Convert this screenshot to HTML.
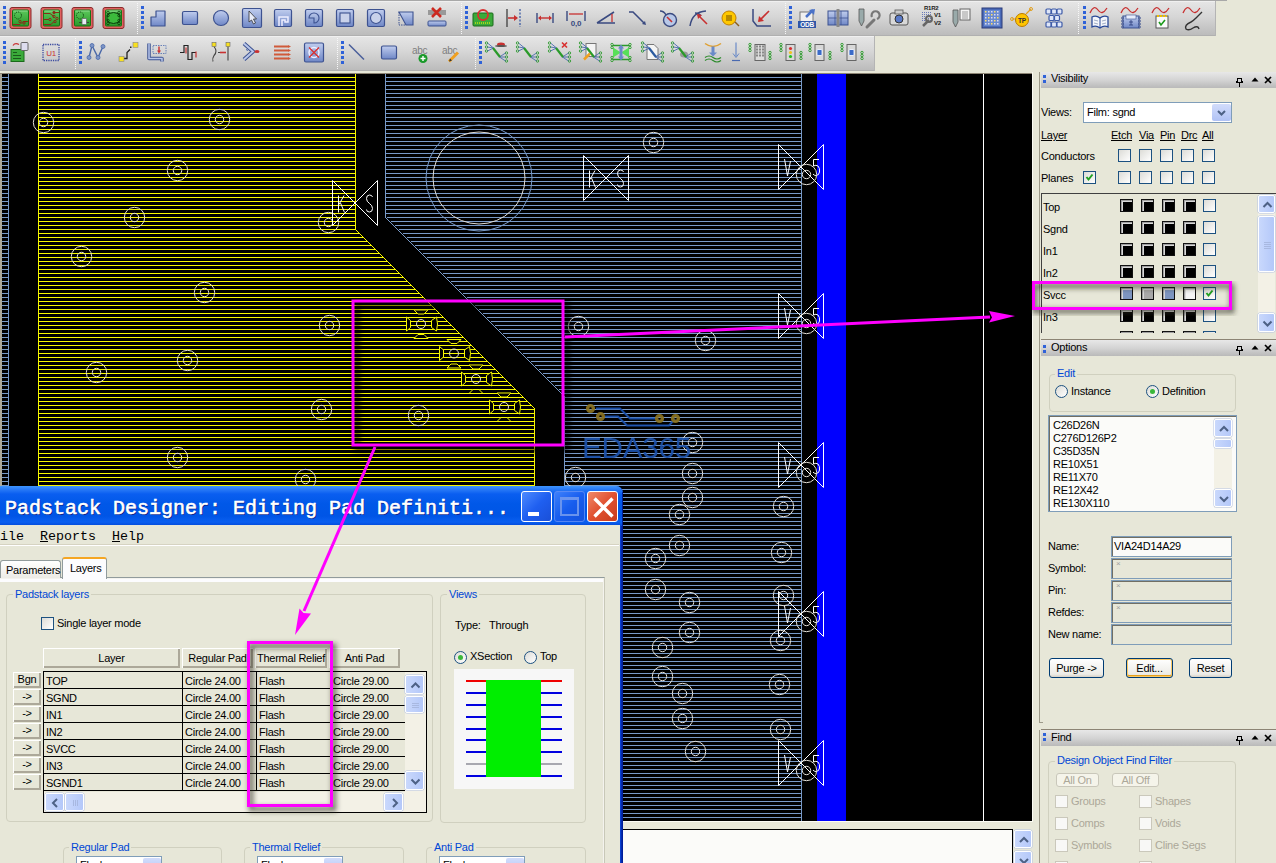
<!DOCTYPE html>
<html><head><meta charset="utf-8"><style>
*{box-sizing:border-box}
body{margin:0;width:1276px;height:863px;overflow:hidden;position:relative;background:#e7e7d8;font-family:"Liberation Sans",sans-serif;font-size:11px;color:#000;letter-spacing:-0.25px}
.t{position:absolute;white-space:pre;font-size:11px;line-height:13px}
.u{text-decoration:underline}
.blue{color:#0046d5}
.gray{color:#aca899}
.cb{position:absolute;width:13px;height:13px;border:1px solid #1c5180;background:linear-gradient(135deg,#dcdcd7,#ffffff)}
.cb svg{left:0;top:0}
.cbd{position:absolute;width:13px;height:13px;border:1px solid #cac8bb;background:#f8f8f6}
.blk{position:absolute;width:13px;height:13px;border:1px solid #111;background:#000;box-shadow:inset 1px 1px 0 #a0a0a0,inset 2px 2px 0 #d8d8d8}
.ptb{position:absolute;left:1041px;width:235px;background:linear-gradient(#e8e8e8,#d4d4d4 50%,#b9b9b9)}
.grip{position:absolute;left:2px;width:3px;height:3px;background:#2f62d8}
.combo{position:absolute;border:1px solid #7f9db9;background:#fff}
.cbtn{position:absolute;background:linear-gradient(#d2dcfb,#b0c2f5);border-radius:2px}
.sbtn{position:absolute;background:linear-gradient(90deg,#c9d8fc,#b4c8f9);border:1px solid #fff;border-radius:2px;box-shadow:0 0 0 0.5px #b5c4e4}
.grp{position:absolute;border:1px solid #d0d0bf;border-radius:4px}
.rad{position:absolute;width:13px;height:13px;border:1px solid #1c5180;border-radius:50%;background:linear-gradient(135deg,#dcdcd7,#fff)}
.rad .dot{position:absolute;left:3px;top:3px;width:5px;height:5px;border-radius:50%;background:#3ab83a}
.lbox{position:absolute;border:1px solid #7f9db9;background:#fbfbf9;overflow:hidden;box-shadow:inset 1px 1px 0 #716f64}
.tbox{position:absolute;border:1px solid #7f9db9;background:#e7e7d8;box-shadow:inset 1px 1px 0 #716f64}
.btn{position:absolute;border:1px solid #003c74;border-radius:3px;background:linear-gradient(#fff,#ecebe6 85%,#d6d0c5);text-align:center;line-height:16px;font-size:11px}
.btn.def{box-shadow:inset 0 0 0 1px #f9c865,inset 0 -1px 0 1px #e5a01a}
.btn.dis{border-color:#c9c7ba;color:#aca899;background:#f5f4ea}
.xpb{position:absolute;width:31px;height:31px;border:1px solid #fff;border-radius:3px;background:linear-gradient(135deg,#4d8bff,#1f5ff0 50%,#1a4fd8)}
.xpb.dis{opacity:.75;border-color:#6d94f5}
.xpb.cls{background:linear-gradient(135deg,#f08a6a,#e05030 50%,#c83c1c)}
.tab{position:absolute;border:1px solid #919b9c;border-bottom:none;border-radius:3px 3px 0 0;background:linear-gradient(#fff,#ecebe5)}
.tab.sel{background:#fcfcfe;border-top:2px solid #f5a623}
.hdr{position:absolute;background:#e7e7d8;text-align:center;line-height:20px;box-shadow:inset 1px 1px 0 #fff,inset -2px -2px 0 #aca899}
.rbtn{position:absolute;background:#e7e7d8;text-align:center;line-height:15px;box-shadow:inset 1px 1px 0 #fff,inset -2px -2px 0 #aca899}
</style></head><body>
<svg width="1276" height="73" style="position:absolute;left:0;top:0"><defs>
<linearGradient id="tbg" x1="0" y1="0" x2="0" y2="1"><stop offset="0" stop-color="#e6e6e6"/><stop offset="0.45" stop-color="#d6d6d6"/><stop offset="1" stop-color="#bababa"/></linearGradient>
<linearGradient id="ib" x1="0" y1="0" x2="0" y2="1"><stop offset="0" stop-color="#c0cdee"/><stop offset="1" stop-color="#6f87c6"/></linearGradient>
<linearGradient id="ig" x1="0" y1="0" x2="0" y2="1"><stop offset="0" stop-color="#5cc85c"/><stop offset="1" stop-color="#2a9a2a"/></linearGradient>
<linearGradient id="ic" x1="0" y1="0" x2="0" y2="1"><stop offset="0" stop-color="#b9c6e8"/><stop offset="1" stop-color="#8399cf"/></linearGradient>
</defs><rect x="0" y="0" width="1227" height="1" fill="#a8a8a8"/><rect x="0" y="1" width="1216" height="35" fill="url(#tbg)"/><rect x="0" y="1" width="1216" height="1" fill="#f0f0f0"/><rect x="0" y="35" width="1216" height="1" fill="#b0b0b0"/><rect x="1215" y="1" width="1" height="35" fill="#b4b4b4"/><rect x="0" y="36" width="875" height="35" fill="url(#tbg)"/><rect x="0" y="36" width="875" height="1" fill="#f0f0f0"/><rect x="0" y="70" width="875" height="1" fill="#b0b0b0"/><rect x="874" y="36" width="1" height="35" fill="#b4b4b4"/><rect x="3" y="6" width="3" height="3" fill="#2f62d8"/><rect x="3" y="11" width="3" height="3" fill="#2f62d8"/><rect x="3" y="16" width="3" height="3" fill="#2f62d8"/><rect x="3" y="21" width="3" height="3" fill="#2f62d8"/><rect x="3" y="26" width="3" height="3" fill="#2f62d8"/><rect x="141" y="6" width="3" height="3" fill="#2f62d8"/><rect x="141" y="11" width="3" height="3" fill="#2f62d8"/><rect x="141" y="16" width="3" height="3" fill="#2f62d8"/><rect x="141" y="21" width="3" height="3" fill="#2f62d8"/><rect x="141" y="26" width="3" height="3" fill="#2f62d8"/><rect x="465" y="6" width="3" height="3" fill="#2f62d8"/><rect x="465" y="11" width="3" height="3" fill="#2f62d8"/><rect x="465" y="16" width="3" height="3" fill="#2f62d8"/><rect x="465" y="21" width="3" height="3" fill="#2f62d8"/><rect x="465" y="26" width="3" height="3" fill="#2f62d8"/><rect x="789" y="6" width="3" height="3" fill="#2f62d8"/><rect x="789" y="11" width="3" height="3" fill="#2f62d8"/><rect x="789" y="16" width="3" height="3" fill="#2f62d8"/><rect x="789" y="21" width="3" height="3" fill="#2f62d8"/><rect x="789" y="26" width="3" height="3" fill="#2f62d8"/><rect x="1083" y="6" width="3" height="3" fill="#2f62d8"/><rect x="1083" y="11" width="3" height="3" fill="#2f62d8"/><rect x="1083" y="16" width="3" height="3" fill="#2f62d8"/><rect x="1083" y="21" width="3" height="3" fill="#2f62d8"/><rect x="1083" y="26" width="3" height="3" fill="#2f62d8"/><line x1="137.5" y1="3" x2="137.5" y2="35" stroke="#f8f8f8" stroke-width="1" stroke-dasharray="1,1"/><line x1="461.5" y1="3" x2="461.5" y2="35" stroke="#f8f8f8" stroke-width="1" stroke-dasharray="1,1"/><line x1="785.5" y1="3" x2="785.5" y2="35" stroke="#f8f8f8" stroke-width="1" stroke-dasharray="1,1"/><line x1="1078.5" y1="3" x2="1078.5" y2="35" stroke="#f8f8f8" stroke-width="1" stroke-dasharray="1,1"/><rect x="3" y="41" width="3" height="3" fill="#2f62d8"/><rect x="3" y="46" width="3" height="3" fill="#2f62d8"/><rect x="3" y="51" width="3" height="3" fill="#2f62d8"/><rect x="3" y="56" width="3" height="3" fill="#2f62d8"/><rect x="3" y="61" width="3" height="3" fill="#2f62d8"/><rect x="79" y="41" width="3" height="3" fill="#2f62d8"/><rect x="79" y="46" width="3" height="3" fill="#2f62d8"/><rect x="79" y="51" width="3" height="3" fill="#2f62d8"/><rect x="79" y="56" width="3" height="3" fill="#2f62d8"/><rect x="79" y="61" width="3" height="3" fill="#2f62d8"/><rect x="341" y="41" width="3" height="3" fill="#2f62d8"/><rect x="341" y="46" width="3" height="3" fill="#2f62d8"/><rect x="341" y="51" width="3" height="3" fill="#2f62d8"/><rect x="341" y="56" width="3" height="3" fill="#2f62d8"/><rect x="341" y="61" width="3" height="3" fill="#2f62d8"/><rect x="479" y="41" width="3" height="3" fill="#2f62d8"/><rect x="479" y="46" width="3" height="3" fill="#2f62d8"/><rect x="479" y="51" width="3" height="3" fill="#2f62d8"/><rect x="479" y="56" width="3" height="3" fill="#2f62d8"/><rect x="479" y="61" width="3" height="3" fill="#2f62d8"/><line x1="75.5" y1="38" x2="75.5" y2="70" stroke="#f8f8f8" stroke-width="1" stroke-dasharray="1,1"/><line x1="337.5" y1="38" x2="337.5" y2="70" stroke="#f8f8f8" stroke-width="1" stroke-dasharray="1,1"/><line x1="475.5" y1="38" x2="475.5" y2="70" stroke="#f8f8f8" stroke-width="1" stroke-dasharray="1,1"/><rect x="10.0" y="7.5" width="21" height="21" rx="2" fill="#e06060" stroke="#8a2a2a" stroke-width="1"/><rect x="12.5" y="10.0" width="16" height="16" rx="1" fill="url(#ig)" stroke="#157515" stroke-width="1"/><path d="M13.5,11.0 h14" stroke="#a0e0a0" stroke-width="0.8"/><circle cx="18.0" cy="15.5" r="3.5" fill="none" stroke="#0a3a0a" stroke-dasharray="1,1"/><path d="M13.0,24.5 h7 l3,-3 h5" stroke="#8a2a18" fill="none"/><circle cx="20.0" cy="21.5" r="1.2" fill="none" stroke="#8a2a18"/><circle cx="24.0" cy="23.0" r="1.2" fill="none" stroke="#8a2a18"/><rect x="41.0" y="7.5" width="21" height="21" rx="2" fill="#e06060" stroke="#8a2a2a" stroke-width="1"/><rect x="43.5" y="10.0" width="16" height="16" rx="1" fill="url(#ig)" stroke="#157515" stroke-width="1"/><path d="M44.5,11.0 h14" stroke="#a0e0a0" stroke-width="0.8"/><path d="M44.0,13.5 h6 l4,3 M53.0,12.5 h6 M44.0,19.5 h5 M44.0,24.5 h7 l3,-3" stroke="#8a2a18" fill="none"/><circle cx="54.0" cy="12.5" r="1.2" fill="none" stroke="#8a2a18"/><circle cx="54.0" cy="16.5" r="1.2" fill="none" stroke="#8a2a18"/><circle cx="57.0" cy="18.5" r="1.2" fill="none" stroke="#8a2a18"/><circle cx="50.0" cy="19.5" r="1.2" fill="none" stroke="#8a2a18"/><circle cx="55.0" cy="21.5" r="1.2" fill="none" stroke="#8a2a18"/><rect x="72.0" y="7.5" width="21" height="21" rx="2" fill="#e06060" stroke="#8a2a2a" stroke-width="1"/><rect x="74.5" y="10.0" width="16" height="16" rx="1" fill="url(#ig)" stroke="#157515" stroke-width="1"/><path d="M75.5,11.0 h14" stroke="#a0e0a0" stroke-width="0.8"/><circle cx="80.0" cy="15.5" r="3.5" fill="none" stroke="#0a3a0a" stroke-dasharray="1,1"/><path d="M79.0,22.5 h10" stroke="#333" stroke-width="0.8"/><rect x="82.0" y="18.5" width="4.5" height="6" rx="0.8" fill="#e8ecf4" stroke="#666" stroke-width="0.8"/><rect x="103.0" y="7.5" width="21" height="21" rx="2" fill="#e06060" stroke="#8a2a2a" stroke-width="1"/><rect x="105.5" y="10.0" width="16" height="16" rx="1" fill="url(#ig)" stroke="#157515" stroke-width="1"/><path d="M106.5,11.0 h14" stroke="#a0e0a0" stroke-width="0.8"/><path d="M109.0,13.5 q4.5,-2 9,0 l2,3 v3 l-2,3 q-4.5,2 -9,0 l-2,-3 v-3 Z" fill="#3cba3c" stroke="#0a3a0a" stroke-width="1"/><circle cx="108.0" cy="12.5" r="1.3" fill="none" stroke="#0a3a0a" stroke-width="0.8"/><circle cx="108.0" cy="15.5" r="1.3" fill="none" stroke="#0a3a0a" stroke-width="0.8"/><circle cx="119.0" cy="12.5" r="1.3" fill="none" stroke="#0a3a0a" stroke-width="0.8"/><circle cx="119.0" cy="15.5" r="1.3" fill="none" stroke="#0a3a0a" stroke-width="0.8"/><circle cx="108.0" cy="20.5" r="1.3" fill="none" stroke="#0a3a0a" stroke-width="0.8"/><circle cx="108.0" cy="23.5" r="1.3" fill="none" stroke="#0a3a0a" stroke-width="0.8"/><circle cx="119.0" cy="20.5" r="1.3" fill="none" stroke="#0a3a0a" stroke-width="0.8"/><circle cx="119.0" cy="23.5" r="1.3" fill="none" stroke="#0a3a0a" stroke-width="0.8"/><path d="M151,17 h5 v-6 h9 v15 h-14 Z" fill="url(#ib)" stroke="#3d5290" stroke-width="1.2" stroke-linejoin="round"/><rect x="182.5" y="11.5" width="15" height="13" rx="1.5" fill="url(#ib)" stroke="#3d5290" stroke-width="1.2"/><circle cx="221" cy="18" r="7.5" fill="url(#ib)" stroke="#3d5290" stroke-width="1.2"/><rect x="242.5" y="8.5" width="19" height="19" rx="1.5" fill="url(#ib)" stroke="#3d5290" stroke-width="1.2"/><path d="M249,11 l0,11 l2.5,-2 l2,4 l2,-1 l-2,-4 l3,0 Z" fill="#e8ecf8" stroke="#333" stroke-width="0.8"/><rect x="274.5" y="9.5" width="17" height="17" rx="1.5" fill="url(#ib)" stroke="#3d5290" stroke-width="1.2"/><path d="M279,26 v-9 h9 v5 h-3 v-2 h-3 v6" fill="none" stroke="#eef" stroke-width="1.5"/><rect x="305.5" y="9.5" width="17" height="17" rx="1.5" fill="url(#ib)" stroke="#3d5290" stroke-width="1.2"/><path d="M309,18 a5,5 0 1,1 5,5 v-5 Z" fill="url(#ic)" stroke="#3d5290" stroke-width="1.1"/><rect x="336.5" y="9.5" width="17" height="17" rx="1.5" fill="url(#ib)" stroke="#3d5290" stroke-width="1.2"/><rect x="340" y="13" width="10" height="10" fill="#c9d2ea" stroke="#3d5290" stroke-width="1.1"/><rect x="367.5" y="9.5" width="17" height="17" rx="1.5" fill="url(#ib)" stroke="#3d5290" stroke-width="1.2"/><circle cx="376" cy="18" r="5.5" fill="#c9d2ea" stroke="#3d5290" stroke-width="1.1"/><path d="M399,12 h14 v13 h-7 Z" fill="url(#ib)" stroke="#3d5290" stroke-width="1.1"/><path d="M399,12 v13 h7" fill="none" stroke="#3d5290" stroke-width="1" stroke-dasharray="1.5,1"/><rect x="428" y="10" width="18" height="5" fill="#999"/><path d="M432,8 l9,9 M441,8 l-9,9" stroke="#cc2a20" stroke-width="2.6"/><rect x="428" y="21" width="18" height="5" rx="1" fill="url(#ib)" stroke="#3d5290"/><rect x="473" y="13" width="20" height="13" rx="1" fill="#3aaa3a" stroke="#1a6a1a"/><path d="M475,23 h16" stroke="#ff0" stroke-dasharray="1,1"/><circle cx="483" cy="15" r="5" fill="none" stroke="#d83030" stroke-width="1.8"/><path d="M507,9 v18" stroke="#333" stroke-width="1.2"/><path d="M520,9 v18" stroke="#3050a0" stroke-width="1.2" stroke-dasharray="2,1.5"/><path d="M508,18 h9" stroke="#c83030" stroke-width="1.6"/><path d="M518,18 l-4,-3 v6 Z" fill="#c83030"/><path d="M537,13 v10 M553,13 v10" stroke="#3a4a80" stroke-width="1.4"/><path d="M539,18 h12" stroke="#c83030" stroke-width="1.4"/><path d="M538,18 l3,-2.5 v5 Z M552,18 l-3,-2.5 v5 Z" fill="#c83030"/><path d="M567,11 v10 M585,11 v10" stroke="#3a4a80" stroke-width="1.4"/><path d="M569,14 h14" stroke="#c83030" stroke-width="1.3"/><text x="576" y="26" font-family="Liberation Sans" font-size="8" font-weight="bold" fill="#3a4a80" text-anchor="middle">0,0</text><path d="M597,23 h18 M597,23 l17,-11" stroke="#3a4a80" stroke-width="1.5" fill="none"/><path d="M612,14 v8" stroke="#c83030" stroke-width="1.3"/><path d="M629,12 h4 l11,11" stroke="#3a4a80" stroke-width="1.5" fill="none"/><path d="M646,25 l-4,-1 l3,-3 Z" fill="#3a4a80"/><circle cx="670" cy="20" r="6.5" fill="#b8c8e8" stroke="#3a4a80" stroke-width="1.4"/><path d="M660,11 q4,0 6,4" stroke="#3a4a80" stroke-width="1.4" fill="none"/><path d="M667,17 l5,5" stroke="#c83030" stroke-width="1.6"/><path d="M690,26 q2,-14 16,-15" stroke="#3a4a80" stroke-width="1.5" fill="none"/><path d="M695,13 q4,0 6,3" stroke="#3a4a80" stroke-width="1.4" fill="none"/><path d="M698,15 l9,9" stroke="#c83030" stroke-width="1.6"/><path d="M697,14 l5,1 l-4,4 Z" fill="#c83030"/><circle cx="729" cy="18" r="7" fill="#ffc800" stroke="#c08000" stroke-width="1"/><path d="M726,16 h6 M726,18 h6 M726,20 h6" stroke="#604000" stroke-width="0.9"/><path d="M735,22 l4,4" stroke="#8a6020" stroke-width="1.5"/><path d="M753,9 v12 l4,5 h14" stroke="#3a4a80" stroke-width="1.5" fill="none"/><path d="M769,11 l-10,10" stroke="#c83030" stroke-width="1.6"/><path d="M758,22 l1,-6 l5,5 Z" fill="#c83030"/><rect x="800" y="12" width="13" height="11" fill="#f0f0f0" stroke="#777"/><path d="M806,17 l7,-7" stroke="#4a72c8" stroke-width="2.5"/><path d="M815,9 l-6,1 l5,5 Z" fill="#4a72c8"/><rect x="798" y="21" width="18" height="7" fill="#2f57a8"/><text x="807" y="27.2" font-family="Liberation Sans" font-size="6.5" font-weight="bold" fill="#fff" text-anchor="middle">ODB</text><rect x="828" y="11" width="20" height="14" fill="url(#ib)" stroke="#3d5290"/><path d="M835,11 v14 M841,11 v14 M828,18 h20" stroke="#3d5290" stroke-width="0.8"/><rect x="836.5" y="9" width="3" height="18" fill="#888"/><path d="M859,9 h5 v12 l-2.5,5 l-2.5,-5 Z" fill="#9aa" stroke="#555" stroke-width="0.8"/><path d="M867,27 l7,-7" stroke="#777" stroke-width="3" stroke-linecap="round"/><path d="M872,17 a4,4 0 1,1 5,2" fill="none" stroke="#777" stroke-width="2.2"/><rect x="890" y="13" width="18" height="12" rx="2" fill="#d8d8d8" stroke="#555"/><rect x="895" y="10" width="8" height="4" fill="#ccc" stroke="#555" stroke-width="0.8"/><circle cx="899" cy="19" r="4" fill="#5a7ac8" stroke="#333"/><text x="924" y="10" font-family="Liberation Sans" font-size="6" font-weight="bold" fill="#222">R1R2</text><text x="934" y="17" font-family="Liberation Sans" font-size="6" font-weight="bold" fill="#222">V1</text><text x="934" y="25" font-family="Liberation Sans" font-size="6" font-weight="bold" fill="#222">V2</text><rect x="922" y="12" width="1" height="1" fill="#6a7ab8"/><rect x="922" y="14" width="1" height="1" fill="#6a7ab8"/><rect x="922" y="16" width="1" height="1" fill="#6a7ab8"/><rect x="922" y="18" width="1" height="1" fill="#6a7ab8"/><rect x="922" y="20" width="1" height="1" fill="#6a7ab8"/><rect x="924" y="12" width="1" height="1" fill="#6a7ab8"/><rect x="924" y="14" width="1" height="1" fill="#6a7ab8"/><rect x="924" y="16" width="1" height="1" fill="#6a7ab8"/><rect x="924" y="18" width="1" height="1" fill="#6a7ab8"/><rect x="924" y="20" width="1" height="1" fill="#6a7ab8"/><rect x="926" y="12" width="1" height="1" fill="#6a7ab8"/><rect x="926" y="14" width="1" height="1" fill="#6a7ab8"/><rect x="926" y="16" width="1" height="1" fill="#6a7ab8"/><rect x="926" y="18" width="1" height="1" fill="#6a7ab8"/><rect x="926" y="20" width="1" height="1" fill="#6a7ab8"/><rect x="928" y="12" width="1" height="1" fill="#6a7ab8"/><rect x="928" y="14" width="1" height="1" fill="#6a7ab8"/><rect x="928" y="16" width="1" height="1" fill="#6a7ab8"/><rect x="928" y="18" width="1" height="1" fill="#6a7ab8"/><rect x="928" y="20" width="1" height="1" fill="#6a7ab8"/><rect x="930" y="12" width="1" height="1" fill="#6a7ab8"/><rect x="930" y="14" width="1" height="1" fill="#6a7ab8"/><rect x="930" y="16" width="1" height="1" fill="#6a7ab8"/><rect x="930" y="18" width="1" height="1" fill="#6a7ab8"/><rect x="930" y="20" width="1" height="1" fill="#6a7ab8"/><path d="M923,26 l6,-6" stroke="#666" stroke-width="2.5"/><circle cx="929" cy="19" r="3" fill="none" stroke="#666" stroke-width="2"/><path d="M953,10 h5 v12 l-2.5,5 l-2.5,-5 Z" fill="#9aa" stroke="#555" stroke-width="0.8"/><rect x="960" y="9" width="10" height="11" fill="#f4f4f4" stroke="#666"/><path d="M962,12 h6 M962,14 h6 M962,16 h6 M962,18 h6" stroke="#777" stroke-width="0.7"/><rect x="982" y="8" width="20" height="20" fill="#4a6ab8" stroke="#2a3a78"/><rect x="984" y="10" width="16" height="16" fill="#6a8ad0"/><rect x="985" y="11" width="1.5" height="1.5" fill="#ffe060"/><rect x="985" y="14" width="1.5" height="1.5" fill="#dde"/><rect x="985" y="17" width="1.5" height="1.5" fill="#dde"/><rect x="985" y="20" width="1.5" height="1.5" fill="#ffe060"/><rect x="985" y="23" width="1.5" height="1.5" fill="#dde"/><rect x="988" y="11" width="1.5" height="1.5" fill="#dde"/><rect x="988" y="14" width="1.5" height="1.5" fill="#dde"/><rect x="988" y="17" width="1.5" height="1.5" fill="#ffe060"/><rect x="988" y="20" width="1.5" height="1.5" fill="#dde"/><rect x="988" y="23" width="1.5" height="1.5" fill="#dde"/><rect x="991" y="11" width="1.5" height="1.5" fill="#dde"/><rect x="991" y="14" width="1.5" height="1.5" fill="#ffe060"/><rect x="991" y="17" width="1.5" height="1.5" fill="#dde"/><rect x="991" y="20" width="1.5" height="1.5" fill="#dde"/><rect x="991" y="23" width="1.5" height="1.5" fill="#ffe060"/><rect x="994" y="11" width="1.5" height="1.5" fill="#ffe060"/><rect x="994" y="14" width="1.5" height="1.5" fill="#dde"/><rect x="994" y="17" width="1.5" height="1.5" fill="#dde"/><rect x="994" y="20" width="1.5" height="1.5" fill="#ffe060"/><rect x="994" y="23" width="1.5" height="1.5" fill="#dde"/><rect x="997" y="11" width="1.5" height="1.5" fill="#dde"/><rect x="997" y="14" width="1.5" height="1.5" fill="#dde"/><rect x="997" y="17" width="1.5" height="1.5" fill="#ffe060"/><rect x="997" y="20" width="1.5" height="1.5" fill="#dde"/><rect x="997" y="23" width="1.5" height="1.5" fill="#dde"/><path d="M1012,19 h4 M1026,14 l5,-5" stroke="#e0a020" stroke-width="1.2"/><circle cx="1012" cy="19" r="1.5" fill="none" stroke="#e0a020"/><circle cx="1031" cy="9" r="1.5" fill="none" stroke="#e0a020"/><circle cx="1022" cy="20" r="6.5" fill="#ffc400" stroke="#b87a00"/><text x="1022" y="23" font-family="Liberation Sans" font-size="6.5" font-weight="bold" fill="#333" text-anchor="middle">TP</text><rect x="1046" y="9" width="5" height="5" rx="1" fill="#dfe6f8" stroke="#3d5aa8" stroke-width="1.2"/><rect x="1051.5" y="9" width="5" height="5" rx="1" fill="#dfe6f8" stroke="#3d5aa8" stroke-width="1.2"/><rect x="1057" y="9" width="5" height="5" rx="1" fill="#dfe6f8" stroke="#3d5aa8" stroke-width="1.2"/><rect x="1049" y="15.5" width="5" height="5" rx="1" fill="#dfe6f8" stroke="#3d5aa8" stroke-width="1.2"/><rect x="1054.5" y="15.5" width="5" height="5" rx="1" fill="#dfe6f8" stroke="#3d5aa8" stroke-width="1.2"/><rect x="1046" y="22" width="5" height="5" rx="1" fill="#dfe6f8" stroke="#3d5aa8" stroke-width="1.2"/><rect x="1051.5" y="22" width="5" height="5" rx="1" fill="#dfe6f8" stroke="#3d5aa8" stroke-width="1.2"/><rect x="1057" y="22" width="5" height="5" rx="1" fill="#dfe6f8" stroke="#3d5aa8" stroke-width="1.2"/><path d="M1090,13 Q1094,4 1098,10 Q1102,16 1107,8" stroke="#c83030" stroke-width="1.3" fill="none"/><path d="M1121,13 Q1125,4 1129,10 Q1133,16 1138,8" stroke="#c83030" stroke-width="1.3" fill="none"/><path d="M1152,13 Q1156,4 1160,10 Q1164,16 1169,8" stroke="#c83030" stroke-width="1.3" fill="none"/><path d="M1183,13 Q1187,4 1191,10 Q1195,16 1200,8" stroke="#c83030" stroke-width="1.3" fill="none"/><path d="M1092,17 q4,-2 8,1 q4,-3 8,-1 v10 q-4,-2 -8,1 q-4,-3 -8,-1 Z" fill="#f4f6fb" stroke="#2a4a98" stroke-width="1.3"/><path d="M1100,18 v10" stroke="#2a4a98"/><path d="M1094,20 l4,1 M1094,23 l4,1 M1102,21 l4,-1 M1102,24 l4,-1" stroke="#8a9ab8" stroke-width="0.8"/><rect x="1123" y="16" width="16" height="12" fill="url(#ib)" stroke="#3d5290"/><rect x="1126" y="15" width="10" height="4" fill="#e8eefc" stroke="#3d5290" stroke-width="0.6"/><circle cx="1122.5" cy="18" r="1" fill="none" stroke="#3d5290" stroke-width="0.8"/><circle cx="1122.5" cy="21" r="1" fill="none" stroke="#3d5290" stroke-width="0.8"/><circle cx="1122.5" cy="24" r="1" fill="none" stroke="#3d5290" stroke-width="0.8"/><circle cx="1122.5" cy="27" r="1" fill="none" stroke="#3d5290" stroke-width="0.8"/><circle cx="1139.5" cy="18" r="1" fill="none" stroke="#3d5290" stroke-width="0.8"/><circle cx="1139.5" cy="21" r="1" fill="none" stroke="#3d5290" stroke-width="0.8"/><circle cx="1139.5" cy="24" r="1" fill="none" stroke="#3d5290" stroke-width="0.8"/><circle cx="1139.5" cy="27" r="1" fill="none" stroke="#3d5290" stroke-width="0.8"/><path d="M1129,22 h4 M1131,20 v5 M1129,25 h4" stroke="#2a3a78" stroke-width="0.8"/><rect x="1156" y="16" width="12" height="12" fill="#fafafa" stroke="#555"/><path d="M1157,16 h10" stroke="#f0c000" stroke-width="2" stroke-dasharray="2,1"/><path d="M1159,22 l2,3 l4,-5" stroke="#1a9a1a" stroke-width="1.6" fill="none"/><path d="M1202,12 l-6,6 q-3,3 -5,4 q-7,3 -5,7 q3,2 7,-1 q5,-3 6,1" stroke="#333" stroke-width="1.4" fill="none"/><rect x="11" y="49.5" width="13" height="12" fill="#3aaa3a" stroke="#1a6a1a"/><path d="M13,52.5 h4 M13,55.5 h8 M13,58.5 h8" stroke="#1a5a1a"/><rect x="21" y="42.5" width="7" height="8" rx="1" fill="#dde" stroke="#666"/><path d="M13,45.5 q2,-3 6,-1" stroke="#c83030" stroke-width="1.3" fill="none"/><rect x="43" y="44.5" width="16" height="16" fill="none" stroke="#3a4aa0" stroke-width="1.3" stroke-dasharray="1.3,1"/><text x="51" y="56.0" font-family="Liberation Sans" font-size="8" fill="#c83030" text-anchor="middle">U1</text><path d="M89,57.5 l3,-12 l6,12 l5,-11" stroke="#4a68a8" stroke-width="1.4" fill="none"/><circle cx="89" cy="57.5" r="2" fill="#7d95c8" stroke="#4a68a8" stroke-width="0.8"/><circle cx="92" cy="45.5" r="2" fill="#7d95c8" stroke="#4a68a8" stroke-width="0.8"/><circle cx="98" cy="57.5" r="2" fill="#7d95c8" stroke="#4a68a8" stroke-width="0.8"/><circle cx="103" cy="46.5" r="2" fill="#7d95c8" stroke="#4a68a8" stroke-width="0.8"/><path d="M124,58.5 h3 v-6 l3,-3" stroke="#222" stroke-width="1.3" fill="none"/><rect x="119" y="56.5" width="5" height="5" fill="#f8e020" stroke="#888" stroke-width="0.6"/><rect x="133" y="42.5" width="5" height="5" fill="#f8e020" stroke="#888" stroke-width="0.6"/><rect x="130" y="46.5" width="1.5" height="1.5" fill="#222"/><path d="M149,43.5 v15 h13 v3" stroke="#3d5290" stroke-width="3.5" fill="none" stroke-linejoin="round"/><path d="M149,43.5 v15 h13 v3" stroke="#b8c6ea" stroke-width="1.5" fill="none"/><rect x="153" y="45.5" width="13" height="8" fill="none" stroke="#4a6ab0" stroke-width="0.8" stroke-dasharray="1.5,1"/><path d="M159,46.5 v5" stroke="#c83030" stroke-width="1.4"/><path d="M157,50.5 h4 l-2,3 Z" fill="#c83030"/><path d="M180,52.5 h4 v-7 h4 v14 h4 v-7 h4" stroke="#222" stroke-width="1.2" fill="none"/><path d="M186,53.5 v-6 M196,51.5 v6" stroke="#c83030" stroke-width="1.2"/><path d="M214,46.5 q4,5 0,9 q-2,3 -1,6 M228,46.5 v14 M218,52.5 h8" stroke="#444" stroke-width="1.1" fill="none"/><path d="M220,52.5 h6" stroke="#c83030" stroke-width="1.6"/><rect x="212" y="42.5" width="4" height="4" fill="#f8e020" stroke="#666" stroke-width="0.6"/><rect x="226" y="42.5" width="4" height="4" fill="#f8e020" stroke="#666" stroke-width="0.6"/><path d="M244,43.5 l9,8 l-9,8" stroke="#3d5290" stroke-width="4" fill="none"/><path d="M244,43.5 l9,8 l-9,8" stroke="#b8c6ea" stroke-width="2" fill="none"/><ellipse cx="257" cy="51.5" rx="2.5" ry="1.5" fill="#c83030"/><path d="M246,49.5 l2,1" stroke="#4a6ab0"/><path d="M274,46.5 h14" stroke="#d05a3a" stroke-width="2"/><path d="M288,45.0 l3,1.5 l-3,1.5 Z" fill="#d05a3a"/><path d="M274,50.5 h14" stroke="#d05a3a" stroke-width="2"/><path d="M288,49.0 l3,1.5 l-3,1.5 Z" fill="#d05a3a"/><path d="M274,54.5 h14" stroke="#d05a3a" stroke-width="2"/><path d="M288,53.0 l3,1.5 l-3,1.5 Z" fill="#d05a3a"/><path d="M274,58.5 h14" stroke="#d05a3a" stroke-width="2"/><path d="M288,57.0 l3,1.5 l-3,1.5 Z" fill="#d05a3a"/><rect x="304.5" y="43.0" width="19" height="19" rx="1.5" fill="url(#ib)" stroke="#3d5290" stroke-width="1.2"/><circle cx="314" cy="52.5" r="5" fill="none" stroke="#eef" stroke-width="1.5"/><path d="M309,47.5 l10,10 M319,47.5 l-10,10" stroke="#d83030" stroke-width="1.3"/><path d="M349,44.5 l15,15" stroke="#4a5f9a" stroke-width="1.5"/><rect x="381.5" y="46.0" width="15" height="13" rx="1.5" fill="url(#ib)" stroke="#3d5290" stroke-width="1.2"/><text x="412" y="53.5" font-family="Liberation Sans" font-size="10" fill="#808080">abc</text><circle cx="423" cy="58.5" r="4.5" fill="#1a9a2a"/><path d="M420.5,58.5 h5 M423,56.0 v5" stroke="#fff" stroke-width="1.4"/><text x="442" y="53.5" font-family="Liberation Sans" font-size="10" fill="#808080">abc</text><path d="M449,61.5 l9,-9" stroke="#f0a020" stroke-width="3"/><path d="M449,61.5 l1,-3 l2,2 Z" fill="#333"/><circle cx="486.5" cy="43.0" r="1.2" fill="none" stroke="#2a9a2a" stroke-width="0.9"/><circle cx="506.5" cy="53.0" r="1.2" fill="none" stroke="#2a9a2a" stroke-width="0.9"/><circle cx="486.5" cy="47.0" r="1.2" fill="none" stroke="#2a9a2a" stroke-width="0.9"/><circle cx="506.5" cy="57.0" r="1.2" fill="none" stroke="#2a9a2a" stroke-width="0.9"/><circle cx="486.5" cy="51.0" r="1.2" fill="none" stroke="#2a9a2a" stroke-width="0.9"/><circle cx="506.5" cy="61.0" r="1.2" fill="none" stroke="#2a9a2a" stroke-width="0.9"/><path d="M487.5,43.0 l6,5 M487.5,47.0 l6,1 M487.5,51.0 l6,-3" stroke="#4a6ab0" stroke-width="0.9"/><path d="M505.5,53.0 l-6,4 M505.5,57.0 l-6,0 M505.5,61.0 l-6,-4" stroke="#4a6ab0" stroke-width="0.9"/><path d="M493,48.0 l7,9" stroke="#2a9a2a" stroke-width="2.2"/><ellipse cx="501" cy="44.5" rx="4" ry="2" fill="#c83030"/><ellipse cx="501" cy="46.0" rx="6" ry="1" fill="#555"/><circle cx="517.5" cy="43.0" r="1.2" fill="none" stroke="#2a9a2a" stroke-width="0.9"/><circle cx="537.5" cy="53.0" r="1.2" fill="none" stroke="#2a9a2a" stroke-width="0.9"/><circle cx="517.5" cy="47.0" r="1.2" fill="none" stroke="#2a9a2a" stroke-width="0.9"/><circle cx="537.5" cy="57.0" r="1.2" fill="none" stroke="#2a9a2a" stroke-width="0.9"/><circle cx="517.5" cy="51.0" r="1.2" fill="none" stroke="#2a9a2a" stroke-width="0.9"/><circle cx="537.5" cy="61.0" r="1.2" fill="none" stroke="#2a9a2a" stroke-width="0.9"/><path d="M518.5,43.0 l6,5 M518.5,47.0 l6,1 M518.5,51.0 l6,-3" stroke="#4a6ab0" stroke-width="0.9"/><path d="M536.5,53.0 l-6,4 M536.5,57.0 l-6,0 M536.5,61.0 l-6,-4" stroke="#4a6ab0" stroke-width="0.9"/><path d="M524,48.0 l7,9" stroke="#2a9a2a" stroke-width="2.2"/><circle cx="549.5" cy="43.0" r="1.2" fill="none" stroke="#2a9a2a" stroke-width="0.9"/><circle cx="569.5" cy="53.0" r="1.2" fill="none" stroke="#2a9a2a" stroke-width="0.9"/><circle cx="549.5" cy="47.0" r="1.2" fill="none" stroke="#2a9a2a" stroke-width="0.9"/><circle cx="569.5" cy="57.0" r="1.2" fill="none" stroke="#2a9a2a" stroke-width="0.9"/><circle cx="549.5" cy="51.0" r="1.2" fill="none" stroke="#2a9a2a" stroke-width="0.9"/><circle cx="569.5" cy="61.0" r="1.2" fill="none" stroke="#2a9a2a" stroke-width="0.9"/><path d="M550.5,43.0 l6,5 M550.5,47.0 l6,1 M550.5,51.0 l6,-3" stroke="#4a6ab0" stroke-width="0.9"/><path d="M568.5,53.0 l-6,4 M568.5,57.0 l-6,0 M568.5,61.0 l-6,-4" stroke="#4a6ab0" stroke-width="0.9"/><path d="M556,48.0 l7,9" stroke="#2a9a2a" stroke-width="2.2"/><path d="M562,42.5 l5,5 M567,42.5 l-5,5" stroke="#d83030" stroke-width="1.6"/><rect x="586" y="43.5" width="10" height="13" fill="#f4f4f4" stroke="#777"/><circle cx="580.5" cy="43.0" r="1.2" fill="none" stroke="#2a9a2a" stroke-width="0.9"/><circle cx="600.5" cy="53.0" r="1.2" fill="none" stroke="#2a9a2a" stroke-width="0.9"/><circle cx="580.5" cy="47.0" r="1.2" fill="none" stroke="#2a9a2a" stroke-width="0.9"/><circle cx="600.5" cy="57.0" r="1.2" fill="none" stroke="#2a9a2a" stroke-width="0.9"/><circle cx="580.5" cy="51.0" r="1.2" fill="none" stroke="#2a9a2a" stroke-width="0.9"/><circle cx="600.5" cy="61.0" r="1.2" fill="none" stroke="#2a9a2a" stroke-width="0.9"/><path d="M581.5,43.0 l6,5 M581.5,47.0 l6,1 M581.5,51.0 l6,-3" stroke="#4a6ab0" stroke-width="0.9"/><path d="M599.5,53.0 l-6,4 M599.5,57.0 l-6,0 M599.5,61.0 l-6,-4" stroke="#4a6ab0" stroke-width="0.9"/><path d="M587,48.0 l7,9" stroke="#2a9a2a" stroke-width="2.2"/><path d="M584,59.5 l6,-6" stroke="#f0a020" stroke-width="2.5"/><path d="M613,45.5 h16 M613,59.5 h16" stroke="#2a9a2a" stroke-width="1.3"/><path d="M613,47.5 l8,5 l8,-5 v10 l-8,-5 l-8,5 Z" fill="#58e058"/><path d="M621,46.5 v12" stroke="#6a8ac8" stroke-width="3"/><path d="M618,48.5 l3,-4 l3,4 Z M618,56.5 l3,4 l3,-4 Z" fill="#6a8ac8"/><circle cx="612" cy="44.5" r="1.2" fill="none" stroke="#2a9a2a" stroke-width="0.9"/><circle cx="612" cy="47.5" r="1.2" fill="none" stroke="#2a9a2a" stroke-width="0.9"/><circle cx="612" cy="57.5" r="1.2" fill="none" stroke="#2a9a2a" stroke-width="0.9"/><circle cx="612" cy="60.5" r="1.2" fill="none" stroke="#2a9a2a" stroke-width="0.9"/><circle cx="630" cy="44.5" r="1.2" fill="none" stroke="#2a9a2a" stroke-width="0.9"/><circle cx="630" cy="47.5" r="1.2" fill="none" stroke="#2a9a2a" stroke-width="0.9"/><circle cx="630" cy="57.5" r="1.2" fill="none" stroke="#2a9a2a" stroke-width="0.9"/><circle cx="630" cy="60.5" r="1.2" fill="none" stroke="#2a9a2a" stroke-width="0.9"/><path d="M647,44.5 h7 l4,4 v11 h-11 Z" fill="#f4f4f4" stroke="#777"/><circle cx="642.5" cy="43.0" r="1.2" fill="none" stroke="#2a9a2a" stroke-width="0.9"/><circle cx="662.5" cy="53.0" r="1.2" fill="none" stroke="#2a9a2a" stroke-width="0.9"/><circle cx="642.5" cy="47.0" r="1.2" fill="none" stroke="#2a9a2a" stroke-width="0.9"/><circle cx="662.5" cy="57.0" r="1.2" fill="none" stroke="#2a9a2a" stroke-width="0.9"/><circle cx="642.5" cy="51.0" r="1.2" fill="none" stroke="#2a9a2a" stroke-width="0.9"/><circle cx="662.5" cy="61.0" r="1.2" fill="none" stroke="#2a9a2a" stroke-width="0.9"/><path d="M643.5,43.0 l6,5 M643.5,47.0 l6,1 M643.5,51.0 l6,-3" stroke="#4a6ab0" stroke-width="0.9"/><path d="M661.5,53.0 l-6,4 M661.5,57.0 l-6,0 M661.5,61.0 l-6,-4" stroke="#4a6ab0" stroke-width="0.9"/><path d="M649,48.0 l7,9" stroke="#2a5aa0" stroke-width="2.2"/><ellipse cx="684" cy="54.5" rx="4" ry="3" fill="#999"/><circle cx="672.5" cy="43.0" r="1.2" fill="none" stroke="#2a9a2a" stroke-width="0.9"/><circle cx="692.5" cy="53.0" r="1.2" fill="none" stroke="#2a9a2a" stroke-width="0.9"/><circle cx="672.5" cy="47.0" r="1.2" fill="none" stroke="#2a9a2a" stroke-width="0.9"/><circle cx="692.5" cy="57.0" r="1.2" fill="none" stroke="#2a9a2a" stroke-width="0.9"/><circle cx="672.5" cy="51.0" r="1.2" fill="none" stroke="#2a9a2a" stroke-width="0.9"/><circle cx="692.5" cy="61.0" r="1.2" fill="none" stroke="#2a9a2a" stroke-width="0.9"/><path d="M673.5,43.0 l6,5 M673.5,47.0 l6,1 M673.5,51.0 l6,-3" stroke="#4a6ab0" stroke-width="0.9"/><path d="M691.5,53.0 l-6,4 M691.5,57.0 l-6,0 M691.5,61.0 l-6,-4" stroke="#4a6ab0" stroke-width="0.9"/><path d="M679,48.0 l7,9" stroke="#2a9a2a" stroke-width="2.2"/><path d="M705,43.5 q8,6 16,0" stroke="#e0a030" stroke-width="1.5" fill="none"/><path d="M705,57.5 q4,-3 8,0 t8,0 M705,60.5 q4,-3 8,0 t8,0" stroke="#2a8a2a" stroke-width="1.2" fill="none"/><path d="M713,46.5 v7" stroke="#6a8ac8" stroke-width="3"/><path d="M709,52.5 h8 l-4,4 Z" fill="#6a8ac8"/><path d="M736,42.5 v14" stroke="#6a8ac8" stroke-width="1.2"/><path d="M733,53.5 l3,4 l3,-4" stroke="#6a8ac8" fill="none"/><path d="M732,60.5 h8" stroke="#4a6ab0" stroke-width="1.2"/><circle cx="750" cy="44.5" r="1.2" fill="none" stroke="#2a9a2a" stroke-width="0.9"/><circle cx="750" cy="47.5" r="1.2" fill="none" stroke="#2a9a2a" stroke-width="0.9"/><circle cx="750" cy="50.5" r="1.2" fill="none" stroke="#2a9a2a" stroke-width="0.9"/><circle cx="770" cy="52.5" r="1.2" fill="none" stroke="#2a9a2a" stroke-width="0.9"/><circle cx="770" cy="55.5" r="1.2" fill="none" stroke="#2a9a2a" stroke-width="0.9"/><circle cx="770" cy="58.5" r="1.2" fill="none" stroke="#2a9a2a" stroke-width="0.9"/><rect x="755" y="44.5" width="10" height="16" fill="#dcdcdc" stroke="#666"/><rect x="756" y="45.5" width="2" height="2" fill="#888"/><rect x="756" y="48.5" width="2" height="2" fill="#888"/><rect x="756" y="51.5" width="2" height="2" fill="#888"/><rect x="756" y="54.5" width="2" height="2" fill="#888"/><rect x="759" y="45.5" width="2" height="2" fill="#888"/><rect x="759" y="48.5" width="2" height="2" fill="#888"/><rect x="759" y="51.5" width="2" height="2" fill="#888"/><rect x="759" y="54.5" width="2" height="2" fill="#888"/><rect x="762" y="45.5" width="2" height="2" fill="#888"/><rect x="762" y="48.5" width="2" height="2" fill="#888"/><rect x="762" y="51.5" width="2" height="2" fill="#888"/><rect x="762" y="54.5" width="2" height="2" fill="#888"/><circle cx="781" cy="44.5" r="1.2" fill="none" stroke="#2a9a2a" stroke-width="0.9"/><circle cx="781" cy="47.5" r="1.2" fill="none" stroke="#2a9a2a" stroke-width="0.9"/><circle cx="781" cy="50.5" r="1.2" fill="none" stroke="#2a9a2a" stroke-width="0.9"/><circle cx="801" cy="52.5" r="1.2" fill="none" stroke="#2a9a2a" stroke-width="0.9"/><circle cx="801" cy="55.5" r="1.2" fill="none" stroke="#2a9a2a" stroke-width="0.9"/><circle cx="801" cy="58.5" r="1.2" fill="none" stroke="#2a9a2a" stroke-width="0.9"/><rect x="786" y="44.5" width="9" height="16" fill="#d8d8d8" stroke="#666"/><circle cx="790.5" cy="48.5" r="1.6" fill="#d83030"/><circle cx="790.5" cy="52.5" r="1.6" fill="#f0c020"/><circle cx="790.5" cy="56.5" r="1.6" fill="#20c020"/><circle cx="810" cy="44.5" r="1.2" fill="none" stroke="#2a9a2a" stroke-width="0.9"/><circle cx="810" cy="47.5" r="1.2" fill="none" stroke="#2a9a2a" stroke-width="0.9"/><circle cx="810" cy="50.5" r="1.2" fill="none" stroke="#2a9a2a" stroke-width="0.9"/><circle cx="830" cy="52.5" r="1.2" fill="none" stroke="#2a9a2a" stroke-width="0.9"/><circle cx="830" cy="55.5" r="1.2" fill="none" stroke="#2a9a2a" stroke-width="0.9"/><circle cx="830" cy="58.5" r="1.2" fill="none" stroke="#2a9a2a" stroke-width="0.9"/><rect x="815" y="44.5" width="9" height="16" fill="#d8d8d8" stroke="#666"/><rect x="817" y="49.5" width="5" height="6" rx="1" fill="#3a6ac8" stroke="#fff" stroke-width="0.8"/><circle cx="842" cy="44.5" r="1.2" fill="none" stroke="#2a9a2a" stroke-width="0.9"/><circle cx="842" cy="47.5" r="1.2" fill="none" stroke="#2a9a2a" stroke-width="0.9"/><circle cx="842" cy="50.5" r="1.2" fill="none" stroke="#2a9a2a" stroke-width="0.9"/><circle cx="862" cy="52.5" r="1.2" fill="none" stroke="#2a9a2a" stroke-width="0.9"/><circle cx="862" cy="55.5" r="1.2" fill="none" stroke="#2a9a2a" stroke-width="0.9"/><circle cx="862" cy="58.5" r="1.2" fill="none" stroke="#2a9a2a" stroke-width="0.9"/><rect x="847" y="44.5" width="9" height="16" fill="#d8d8d8" stroke="#666"/><rect x="849" y="49.5" width="5" height="6" rx="1" fill="#3a6ac8" stroke="#fff" stroke-width="0.8"/></svg>
<svg width="1030" height="747" viewBox="2 74 1030 747" style="position:absolute;left:2px;top:74px">
<defs>
<pattern id="py" x="0" y="77" width="16" height="4" patternUnits="userSpaceOnUse"><rect x="0" y="0" width="16" height="1" fill="#f8f800"/></pattern>
<pattern id="pb" x="0" y="77" width="16" height="4" patternUnits="userSpaceOnUse"><rect x="0" y="0" width="16" height="1" fill="#789ac8"/></pattern>
</defs>
<rect x="2" y="74" width="1030" height="747" fill="#000"/>
<g shape-rendering="crispEdges">
<rect x="2" y="74" width="6" height="747" fill="url(#pb)"/>
<rect x="8" y="74" width="1" height="747" fill="#789ac8"/>
<path d="M39,74 L355,74 L355,229 L534,408 L534,821 L39,821 Z" fill="url(#py)"/>
<path d="M38.5,74 L38.5,821 M355.5,74 L355.5,229.5 L534.5,408.5 L534.5,821" fill="none" stroke="#f8f800" stroke-width="1"/>
<path d="M386,74 L801,74 L801,821 L565,821 L565,396 L386,217 Z" fill="url(#pb)"/>
<path d="M385.5,74 L385.5,217.5 L564.5,396.5 L564.5,821 M801.5,74 L801.5,821" fill="none" stroke="#789ac8" stroke-width="1"/>
<rect x="817" y="74" width="29" height="747" fill="#0000ff"/>
<rect x="983" y="74" width="1" height="747" fill="#ffffff"/>
</g>
<circle cx="479" cy="178" r="53" fill="none" stroke="#789ac8" stroke-width="1"/>
<circle cx="479" cy="178" r="46" fill="none" stroke="#e2ded6" stroke-width="1"/>
<circle cx="43.5" cy="122.5" r="10.2" fill="none" stroke="#e2ded6" stroke-width="1"/><circle cx="43.5" cy="122.5" r="4.2" fill="none" stroke="#e2ded6" stroke-width="1"/>
<circle cx="219.5" cy="119.5" r="10.2" fill="none" stroke="#e2ded6" stroke-width="1"/><circle cx="219.5" cy="119.5" r="4.2" fill="none" stroke="#e2ded6" stroke-width="1"/>
<circle cx="177.5" cy="170.5" r="10.2" fill="none" stroke="#e2ded6" stroke-width="1"/><circle cx="177.5" cy="170.5" r="4.2" fill="none" stroke="#e2ded6" stroke-width="1"/>
<circle cx="134.5" cy="217.5" r="10.2" fill="none" stroke="#e2ded6" stroke-width="1"/><circle cx="134.5" cy="217.5" r="4.2" fill="none" stroke="#e2ded6" stroke-width="1"/>
<circle cx="81.5" cy="256.5" r="10.2" fill="none" stroke="#e2ded6" stroke-width="1"/><circle cx="81.5" cy="256.5" r="4.2" fill="none" stroke="#e2ded6" stroke-width="1"/>
<circle cx="328.5" cy="222.5" r="10.2" fill="none" stroke="#e2ded6" stroke-width="1"/><circle cx="328.5" cy="222.5" r="4.2" fill="none" stroke="#e2ded6" stroke-width="1"/>
<circle cx="204.5" cy="292.5" r="10.2" fill="none" stroke="#e2ded6" stroke-width="1"/><circle cx="204.5" cy="292.5" r="4.2" fill="none" stroke="#e2ded6" stroke-width="1"/>
<circle cx="329.5" cy="325.5" r="10.2" fill="none" stroke="#e2ded6" stroke-width="1"/><circle cx="329.5" cy="325.5" r="4.2" fill="none" stroke="#e2ded6" stroke-width="1"/>
<circle cx="187.5" cy="360.5" r="10.2" fill="none" stroke="#e2ded6" stroke-width="1"/><circle cx="187.5" cy="360.5" r="4.2" fill="none" stroke="#e2ded6" stroke-width="1"/>
<circle cx="96.5" cy="372.5" r="10.2" fill="none" stroke="#e2ded6" stroke-width="1"/><circle cx="96.5" cy="372.5" r="4.2" fill="none" stroke="#e2ded6" stroke-width="1"/>
<circle cx="321.5" cy="409.5" r="10.2" fill="none" stroke="#e2ded6" stroke-width="1"/><circle cx="321.5" cy="409.5" r="4.2" fill="none" stroke="#e2ded6" stroke-width="1"/>
<circle cx="177.5" cy="457.5" r="10.2" fill="none" stroke="#e2ded6" stroke-width="1"/><circle cx="177.5" cy="457.5" r="4.2" fill="none" stroke="#e2ded6" stroke-width="1"/>
<circle cx="305.5" cy="479.5" r="10.2" fill="none" stroke="#e2ded6" stroke-width="1"/><circle cx="305.5" cy="479.5" r="4.2" fill="none" stroke="#e2ded6" stroke-width="1"/>
<circle cx="418.5" cy="415.5" r="10.2" fill="none" stroke="#e2ded6" stroke-width="1"/><circle cx="418.5" cy="415.5" r="4.2" fill="none" stroke="#e2ded6" stroke-width="1"/>
<circle cx="653.5" cy="142.5" r="10.2" fill="none" stroke="#e2ded6" stroke-width="1"/><circle cx="653.5" cy="142.5" r="4.2" fill="none" stroke="#e2ded6" stroke-width="1"/>
<circle cx="578.5" cy="326.5" r="10.2" fill="none" stroke="#e2ded6" stroke-width="1"/><circle cx="578.5" cy="326.5" r="4.2" fill="none" stroke="#e2ded6" stroke-width="1"/>
<circle cx="705.5" cy="340.5" r="10.2" fill="none" stroke="#e2ded6" stroke-width="1"/><circle cx="705.5" cy="340.5" r="4.2" fill="none" stroke="#e2ded6" stroke-width="1"/>
<circle cx="692.5" cy="442.5" r="10.2" fill="none" stroke="#e2ded6" stroke-width="1"/><circle cx="692.5" cy="442.5" r="4.2" fill="none" stroke="#e2ded6" stroke-width="1"/>
<circle cx="692.5" cy="473.5" r="10.2" fill="none" stroke="#e2ded6" stroke-width="1"/><circle cx="692.5" cy="473.5" r="4.2" fill="none" stroke="#e2ded6" stroke-width="1"/>
<circle cx="692.5" cy="497.5" r="10.2" fill="none" stroke="#e2ded6" stroke-width="1"/><circle cx="692.5" cy="497.5" r="4.2" fill="none" stroke="#e2ded6" stroke-width="1"/>
<circle cx="679.5" cy="514.5" r="10.2" fill="none" stroke="#e2ded6" stroke-width="1"/><circle cx="679.5" cy="514.5" r="4.2" fill="none" stroke="#e2ded6" stroke-width="1"/>
<circle cx="679.5" cy="545.5" r="10.2" fill="none" stroke="#e2ded6" stroke-width="1"/><circle cx="679.5" cy="545.5" r="4.2" fill="none" stroke="#e2ded6" stroke-width="1"/>
<circle cx="655.5" cy="558.5" r="10.2" fill="none" stroke="#e2ded6" stroke-width="1"/><circle cx="655.5" cy="558.5" r="4.2" fill="none" stroke="#e2ded6" stroke-width="1"/>
<circle cx="655.5" cy="589.5" r="10.2" fill="none" stroke="#e2ded6" stroke-width="1"/><circle cx="655.5" cy="589.5" r="4.2" fill="none" stroke="#e2ded6" stroke-width="1"/>
<circle cx="689.5" cy="602.5" r="10.2" fill="none" stroke="#e2ded6" stroke-width="1"/><circle cx="689.5" cy="602.5" r="4.2" fill="none" stroke="#e2ded6" stroke-width="1"/>
<circle cx="689.5" cy="632.5" r="10.2" fill="none" stroke="#e2ded6" stroke-width="1"/><circle cx="689.5" cy="632.5" r="4.2" fill="none" stroke="#e2ded6" stroke-width="1"/>
<circle cx="662.5" cy="647.5" r="10.2" fill="none" stroke="#e2ded6" stroke-width="1"/><circle cx="662.5" cy="647.5" r="4.2" fill="none" stroke="#e2ded6" stroke-width="1"/>
<circle cx="662.5" cy="676.5" r="10.2" fill="none" stroke="#e2ded6" stroke-width="1"/><circle cx="662.5" cy="676.5" r="4.2" fill="none" stroke="#e2ded6" stroke-width="1"/>
<circle cx="682.5" cy="693.5" r="10.2" fill="none" stroke="#e2ded6" stroke-width="1"/><circle cx="682.5" cy="693.5" r="4.2" fill="none" stroke="#e2ded6" stroke-width="1"/>
<circle cx="682.5" cy="718.5" r="10.2" fill="none" stroke="#e2ded6" stroke-width="1"/><circle cx="682.5" cy="718.5" r="4.2" fill="none" stroke="#e2ded6" stroke-width="1"/>
<circle cx="695.5" cy="751.5" r="10.2" fill="none" stroke="#e2ded6" stroke-width="1"/><circle cx="695.5" cy="751.5" r="4.2" fill="none" stroke="#e2ded6" stroke-width="1"/>
<circle cx="783.5" cy="506.5" r="10.2" fill="none" stroke="#e2ded6" stroke-width="1"/><circle cx="783.5" cy="506.5" r="4.2" fill="none" stroke="#e2ded6" stroke-width="1"/>
<circle cx="781.5" cy="552.5" r="10.2" fill="none" stroke="#e2ded6" stroke-width="1"/><circle cx="781.5" cy="552.5" r="4.2" fill="none" stroke="#e2ded6" stroke-width="1"/>
<circle cx="783.5" cy="595.5" r="10.2" fill="none" stroke="#e2ded6" stroke-width="1"/><circle cx="783.5" cy="595.5" r="4.2" fill="none" stroke="#e2ded6" stroke-width="1"/>
<circle cx="780.5" cy="640.5" r="10.2" fill="none" stroke="#e2ded6" stroke-width="1"/><circle cx="780.5" cy="640.5" r="4.2" fill="none" stroke="#e2ded6" stroke-width="1"/>
<circle cx="779.5" cy="684.5" r="10.2" fill="none" stroke="#e2ded6" stroke-width="1"/><circle cx="779.5" cy="684.5" r="4.2" fill="none" stroke="#e2ded6" stroke-width="1"/>
<circle cx="780.5" cy="729.5" r="10.2" fill="none" stroke="#e2ded6" stroke-width="1"/><circle cx="780.5" cy="729.5" r="4.2" fill="none" stroke="#e2ded6" stroke-width="1"/>
<circle cx="575.5" cy="477.5" r="10.2" fill="none" stroke="#e2ded6" stroke-width="1"/><circle cx="575.5" cy="477.5" r="4.2" fill="none" stroke="#e2ded6" stroke-width="1"/>
<g fill="#000" stroke="#f8f800" stroke-width="1"><path d="M414,310 L428,310 L424,314 L418,314 Z"/><path d="M418,334.5 L424,334.5 L428,338.5 L414,338.5 Z"/><path d="M406.5,317 L410.5,320.5 L410.5,327.5 L406.5,331 Z"/><path d="M436.5,317 L431.5,320.5 L431.5,327.5 L436.5,331 Q438.5,324 436.5,317 Z"/></g><circle cx="421" cy="324" r="4.5" fill="none" stroke="#e2ded6" stroke-width="1"/>
<g fill="#000" stroke="#f8f800" stroke-width="1"><path d="M447,339.5 L461,339.5 L457,343.5 L451,343.5 Z"/><path d="M451,364.0 L457,364.0 L461,368.0 L447,368.0 Z"/><path d="M439.5,346.5 L443.5,350.0 L443.5,357.0 L439.5,360.5 Z"/><path d="M469.5,346.5 L464.5,350.0 L464.5,357.0 L469.5,360.5 Q471.5,353.5 469.5,346.5 Z"/></g><circle cx="454" cy="353.5" r="4.5" fill="none" stroke="#e2ded6" stroke-width="1"/>
<g fill="#000" stroke="#f8f800" stroke-width="1"><path d="M469,365 L483,365 L479,369 L473,369 Z"/><path d="M473,389.5 L479,389.5 L483,393.5 L469,393.5 Z"/><path d="M461.5,372 L465.5,375.5 L465.5,382.5 L461.5,386 Z"/><path d="M491.5,372 L486.5,375.5 L486.5,382.5 L491.5,386 Q493.5,379 491.5,372 Z"/></g><circle cx="476" cy="379" r="4.5" fill="none" stroke="#e2ded6" stroke-width="1"/>
<g fill="#000" stroke="#f8f800" stroke-width="1"><path d="M497,393 L511,393 L507,397 L501,397 Z"/><path d="M501,417.5 L507,417.5 L511,421.5 L497,421.5 Z"/><path d="M489.5,400 L493.5,403.5 L493.5,410.5 L489.5,414 Z"/><path d="M519.5,400 L514.5,403.5 L514.5,410.5 L519.5,414 Q521.5,407 519.5,400 Z"/></g><circle cx="504" cy="407" r="4.5" fill="none" stroke="#e2ded6" stroke-width="1"/>
<path d="M332.5,180.5 L332.5,225.5 L377.5,180.5 L377.5,225.5 Z" fill="none" stroke="#fff" stroke-width="1"/><path d="M338.5,195.5 V212.5 M344,195.5 L339,204.5 M340.5,203.0 L344.5,212.5" fill="none" stroke="#ffffff" stroke-width="1"/><path d="M372.5,197 Q372,195 369.5,195 Q366.5,195 366.5,198.5 Q366.5,201.5 369.5,203.5 Q372.5,205.5 372.5,208.5 Q372.5,212 369.5,212 Q366.5,212 366.5,209.5" fill="none" stroke="#ffffff" stroke-width="1"/>
<path d="M583.5,155.5 L583.5,200.5 L628.5,155.5 L628.5,200.5 Z" fill="none" stroke="#fff" stroke-width="1"/><path d="M589.5,170.5 V187.5 M595,170.5 L590,179.5 M591.5,178.0 L595.5,187.5" fill="none" stroke="#ffffff" stroke-width="1"/><path d="M623.5,172 Q623,170 620.5,170 Q617.5,170 617.5,173.5 Q617.5,176.5 620.5,178.5 Q623.5,180.5 623.5,183.5 Q623.5,187 620.5,187 Q617.5,187 617.5,184.5" fill="none" stroke="#ffffff" stroke-width="1"/>
<path d="M778.5,144.5 L778.5,189.5 L823.5,144.5 L823.5,189.5 Z" fill="none" stroke="#fff" stroke-width="1"/><path d="M784.5,159 L787.5,176 L790.5,161" fill="none" stroke="#ffffff" stroke-width="1"/><path d="M819,159.5 H813.5 V166 Q816,164.5 818,166 Q820,168 819.5,172 Q819,175.5 816,175.5 Q814,175.5 813,174" fill="none" stroke="#ffffff" stroke-width="1"/>
<circle cx="806.5" cy="174.5" r="10.2" fill="none" stroke="#e2ded6" stroke-width="1"/><circle cx="806.5" cy="174.5" r="4.2" fill="none" stroke="#e2ded6" stroke-width="1"/>
<path d="M778.5,293.5 L778.5,338.5 L823.5,293.5 L823.5,338.5 Z" fill="none" stroke="#fff" stroke-width="1"/><path d="M784.5,308 L787.5,325 L790.5,310" fill="none" stroke="#ffffff" stroke-width="1"/><path d="M819,308.5 H813.5 V315 Q816,313.5 818,315 Q820,317 819.5,321 Q819,324.5 816,324.5 Q814,324.5 813,323" fill="none" stroke="#ffffff" stroke-width="1"/>
<circle cx="806.5" cy="323.5" r="10.2" fill="none" stroke="#e2ded6" stroke-width="1"/><circle cx="806.5" cy="323.5" r="4.2" fill="none" stroke="#e2ded6" stroke-width="1"/>
<path d="M778.5,442.5 L778.5,487.5 L823.5,442.5 L823.5,487.5 Z" fill="none" stroke="#fff" stroke-width="1"/><path d="M784.5,457 L787.5,474 L790.5,459" fill="none" stroke="#ffffff" stroke-width="1"/><path d="M819,457.5 H813.5 V464 Q816,462.5 818,464 Q820,466 819.5,470 Q819,473.5 816,473.5 Q814,473.5 813,472" fill="none" stroke="#ffffff" stroke-width="1"/>
<circle cx="806.5" cy="472.5" r="10.2" fill="none" stroke="#e2ded6" stroke-width="1"/><circle cx="806.5" cy="472.5" r="4.2" fill="none" stroke="#e2ded6" stroke-width="1"/>
<path d="M778.5,591.5 L778.5,636.5 L823.5,591.5 L823.5,636.5 Z" fill="none" stroke="#fff" stroke-width="1"/><path d="M784.5,606 L787.5,623 L790.5,608" fill="none" stroke="#ffffff" stroke-width="1"/><path d="M819,606.5 H813.5 V613 Q816,611.5 818,613 Q820,615 819.5,619 Q819,622.5 816,622.5 Q814,622.5 813,621" fill="none" stroke="#ffffff" stroke-width="1"/>
<circle cx="806.5" cy="621.5" r="10.2" fill="none" stroke="#e2ded6" stroke-width="1"/><circle cx="806.5" cy="621.5" r="4.2" fill="none" stroke="#e2ded6" stroke-width="1"/>
<path d="M778.5,740.5 L778.5,785.5 L823.5,740.5 L823.5,785.5 Z" fill="none" stroke="#fff" stroke-width="1"/><path d="M784.5,755 L787.5,772 L790.5,757" fill="none" stroke="#ffffff" stroke-width="1"/><path d="M819,755.5 H813.5 V762 Q816,760.5 818,762 Q820,764 819.5,768 Q819,771.5 816,771.5 Q814,771.5 813,770" fill="none" stroke="#ffffff" stroke-width="1"/>
<circle cx="806.5" cy="770.5" r="10.2" fill="none" stroke="#e2ded6" stroke-width="1"/><circle cx="806.5" cy="770.5" r="4.2" fill="none" stroke="#e2ded6" stroke-width="1"/>
<g opacity="0.92">
<path d="M596,408.5 L620,408.5 L630,418.5 L655,418.5 M605,416.5 L618,416.5 L627,425.5 L669,425.5 L675,419" fill="none" stroke="#1a52b0" stroke-width="2"/>
<circle cx="590.5" cy="408.5" r="2.9" fill="none" stroke="#8c7420" stroke-width="3.4"/>
<circle cx="600.5" cy="416.5" r="2.9" fill="none" stroke="#8c7420" stroke-width="3.4"/>
<circle cx="659.5" cy="418.5" r="2.9" fill="none" stroke="#8c7420" stroke-width="3.4"/>
<circle cx="675.5" cy="418.5" r="2.9" fill="none" stroke="#8c7420" stroke-width="3.4"/>
<text x="582" y="458" font-family="Liberation Sans" font-size="29" fill="#1c52ac" textLength="109" lengthAdjust="spacingAndGlyphs">EDA365</text>
</g>
<filter id="csh" x="-10%" y="-10%" width="120%" height="120%"><feGaussianBlur stdDeviation="2.5"/></filter>
<rect x="357" y="305" width="210" height="144" fill="none" stroke="#000" stroke-opacity="0.6" stroke-width="6" filter="url(#csh)"/>
<rect x="353" y="301" width="210" height="144" fill="none" stroke="#ff00ff" stroke-width="3"/>
<path d="M565,337 L990,317" stroke="#ff00ff" stroke-width="3" fill="none"/>
<path d="M1015,316 L989,311 L992,317.5 L989,322.5 Z" fill="#ff00ff"/>
</svg>
<div style="position:absolute;left:623px;top:821px;width:409px;height:8px;background:#e7e7d8"></div><div style="position:absolute;left:623px;top:829px;width:390px;height:34px;background:#fbfbf9;border-top:1px solid #000;border-right:1px solid #000"></div><div class="sbtn" style="left:1014px;top:830px;width:18px;height:18px"><svg width="18" height="18" style="position:absolute;left:0;top:0"><path d="M5.0,11.0 L9.0,7.0 L13.0,11.0" stroke="#4d6185" stroke-width="2" fill="none"/></svg></div><div class="sbtn" style="left:1014px;top:851px;width:18px;height:18px"><svg width="18" height="18" style="position:absolute;left:0;top:0"><path d="M5.0,7.0 L9.0,11.0 L13.0,7.0" stroke="#4d6185" stroke-width="2" fill="none"/></svg></div><div style="position:absolute;left:0;top:73px;width:1032px;height:1px;background:#8c8474"></div><div style="position:absolute;left:1032px;top:72px;width:1px;height:750px;background:#fbfbf4"></div><div style="position:absolute;left:0;top:821px;width:1033px;height:1px;background:#fbfbf4"></div><div style="position:absolute;left:0;top:74px;width:2px;height:747px;background:#aca899"></div>
<div style="position:absolute;left:1039px;top:72px;width:1px;height:651px;background:#9d9a8a"></div><div style="position:absolute;left:1039px;top:722px;width:4px;height:1px;background:#9d9a8a"></div><div style="position:absolute;left:1039px;top:730px;width:1px;height:133px;background:#9d9a8a"></div><div class="ptb" style="top:72px;height:16px;"><div class="grip" style="top:3px"></div><div class="grip" style="top:8px"></div><span style="position:absolute;left:10px;top:0px">Visibility</span>
<svg width="40" height="14" style="position:absolute;left:193px;top:2px"><path d="M3.5,4.5 h4 v3 h1 v1 h-6 v-1 h1 Z M5.5,8.5 v4" stroke="#000" stroke-width="1" fill="none" shape-rendering="crispEdges"/><path d="M21,3.5 l3.5,4 h-7 Z" fill="#000"/><path d="M31,3 l6,6 M37,3 l-6,6" stroke="#000" stroke-width="1.7"/></svg></div><div class="t" style="left:1041px;top:106px">Views:</div><div class="combo" style="left:1083px;top:102px;width:149px;height:21px"><span style="position:absolute;left:3px;top:3px">Film: sgnd</span><div class="cbtn" style="left:128px;top:1px;width:19px;height:17px"><svg width="19" height="17"><path d="M6,7 L9.5,10.5 L13,7" stroke="#4d6185" stroke-width="2" fill="none"/></svg></div></div><div class="t u" style="left:1041px;top:129px">Layer</div><div class="t u" style="left:1111px;top:129px">Etch</div><div class="t u" style="left:1139px;top:129px">Via</div><div class="t u" style="left:1160px;top:129px">Pin</div><div class="t u" style="left:1181px;top:129px">Drc</div><div class="t u" style="left:1202px;top:129px">All</div><div class="t" style="left:1041px;top:150px">Conductors</div><div class="t" style="left:1041px;top:172px">Planes</div><div class="cb" style="left:1118px;top:149px"></div><div class="cb" style="left:1118px;top:171px"></div><div class="cb" style="left:1139px;top:149px"></div><div class="cb" style="left:1139px;top:171px"></div><div class="cb" style="left:1160px;top:149px"></div><div class="cb" style="left:1160px;top:171px"></div><div class="cb" style="left:1181px;top:149px"></div><div class="cb" style="left:1181px;top:171px"></div><div class="cb" style="left:1202px;top:149px"></div><div class="cb" style="left:1202px;top:171px"></div><div class="cb" style="left:1083px;top:171px"><svg width="11" height="11" style="position:absolute;left:0;top:0"><path d="M2.5,5 L4.5,7.5 L8.5,2.5" stroke="#21a121" stroke-width="2" fill="none"/></svg></div><div style="position:absolute;left:1041px;top:193px;width:235px;height:140px;border-top:1px solid #404040;border-left:1px solid #404040;overflow:hidden"><div class="t" style="left:1px;top:7px">Top</div><div class="blk" style="left:78px;top:5px"></div><div class="blk" style="left:99px;top:5px"></div><div class="blk" style="left:120px;top:5px"></div><div class="blk" style="left:141px;top:5px"></div><div class="cb" style="left:161px;top:5px"></div><div class="t" style="left:1px;top:29px">Sgnd</div><div class="blk" style="left:78px;top:27px"></div><div class="blk" style="left:99px;top:27px"></div><div class="blk" style="left:120px;top:27px"></div><div class="blk" style="left:141px;top:27px"></div><div class="cb" style="left:161px;top:27px"></div><div class="t" style="left:1px;top:51px">In1</div><div class="blk" style="left:78px;top:49px"></div><div class="blk" style="left:99px;top:49px"></div><div class="blk" style="left:120px;top:49px"></div><div class="blk" style="left:141px;top:49px"></div><div class="cb" style="left:161px;top:49px"></div><div class="t" style="left:1px;top:73px">In2</div><div class="blk" style="left:78px;top:71px"></div><div class="blk" style="left:99px;top:71px"></div><div class="blk" style="left:120px;top:71px"></div><div class="blk" style="left:141px;top:71px"></div><div class="cb" style="left:161px;top:71px"></div><div class="t" style="left:1px;top:95px">Svcc</div><div class="blk" style="left:78px;top:93px;background:#7d95c0"></div><div class="blk" style="left:99px;top:93px;background:#a8a8a8"></div><div class="blk" style="left:120px;top:93px;background:#7d95c0"></div><div class="blk" style="left:141px;top:93px;background:#f4f4f4"></div><div class="cb"  style="left:161px;top:93px"><svg width="11" height="11" style="position:absolute;left:0;top:0"><path d="M2.5,5 L4.5,7.5 L8.5,2.5" stroke="#21a121" stroke-width="2" fill="none"/></svg></div><div class="t" style="left:1px;top:117px">In3</div><div class="blk" style="left:78px;top:115px"></div><div class="blk" style="left:99px;top:115px"></div><div class="blk" style="left:120px;top:115px"></div><div class="blk" style="left:141px;top:115px"></div><div class="cb" style="left:161px;top:115px"></div><div class="t" style="left:1px;top:139px"></div><div class="blk" style="left:78px;top:137px"></div><div class="blk" style="left:99px;top:137px"></div><div class="blk" style="left:120px;top:137px"></div><div class="blk" style="left:141px;top:137px"></div><div class="cb" style="left:161px;top:137px"></div></div><div style="position:absolute;left:1258px;top:195px;width:17px;height:137px;background:#f3f1e6"></div><div class="sbtn" style="left:1258px;top:195px;width:17px;height:18px"><svg width="17" height="18" style="position:absolute;left:0;top:0"><path d="M4.5,11.0 L8.5,7.0 L12.5,11.0" stroke="#4d6185" stroke-width="2" fill="none"/></svg></div><div class="sbtn" style="left:1258px;top:216px;width:17px;height:56px"><svg width="17" height="56"><path d="M5,25.5 h7 M5,27.5 h7 M5,29.5 h7 M5,31.5 h7" stroke="#a8b8e0" stroke-width="1"/></svg></div><div class="sbtn" style="left:1258px;top:313px;width:17px;height:19px"><svg width="17" height="19" style="position:absolute;left:0;top:0"><path d="M4.5,7.5 L8.5,11.5 L12.5,7.5" stroke="#4d6185" stroke-width="2" fill="none"/></svg></div><div class="ptb" style="top:339px;height:17px;border-top:1px solid #8c8474;"><div class="grip" style="top:5px"></div><div class="grip" style="top:10px"></div><span style="position:absolute;left:10px;top:1px">Options</span>
<svg width="40" height="14" style="position:absolute;left:193px;top:2px"><path d="M3.5,4.5 h4 v3 h1 v1 h-6 v-1 h1 Z M5.5,8.5 v4" stroke="#000" stroke-width="1" fill="none" shape-rendering="crispEdges"/><path d="M21,3.5 l3.5,4 h-7 Z" fill="#000"/><path d="M31,3 l6,6 M37,3 l-6,6" stroke="#000" stroke-width="1.7"/></svg></div><div class="grp" style="left:1049px;top:374px;width:187px;height:38px"></div><div class="t blue" style="left:1055px;top:367px;padding:0 2px;background:#e7e7d8">Edit</div><div class="rad" style="left:1055px;top:385px"></div><div class="t" style="left:1071px;top:385px">Instance</div><div class="rad" style="left:1146px;top:385px"><div class="dot"></div></div><div class="t" style="left:1162px;top:385px">Definition</div><div class="lbox" style="left:1048px;top:415px;width:189px;height:97px"><div class="t" style="left:4px;top:3px">C26D26N</div><div class="t" style="left:4px;top:16px">C276D126P2</div><div class="t" style="left:4px;top:29px">C35D35N</div><div class="t" style="left:4px;top:42px">RE10X51</div><div class="t" style="left:4px;top:55px">RE11X70</div><div class="t" style="left:4px;top:68px">RE12X42</div><div class="t" style="left:4px;top:81px">RE130X110</div></div><div style="position:absolute;left:1214px;top:418px;width:18px;height:90px;background:#f3f1e6"></div><div class="sbtn" style="left:1214px;top:419px;width:18px;height:18px"><svg width="18" height="18" style="position:absolute;left:0;top:0"><path d="M5.0,11.0 L9.0,7.0 L13.0,11.0" stroke="#4d6185" stroke-width="2" fill="none"/></svg></div><div class="sbtn" style="left:1214px;top:439px;width:18px;height:9px"></div><div class="sbtn" style="left:1214px;top:489px;width:18px;height:18px"><svg width="18" height="18" style="position:absolute;left:0;top:0"><path d="M5.0,7.0 L9.0,11.0 L13.0,7.0" stroke="#4d6185" stroke-width="2" fill="none"/></svg></div><div class="t" style="left:1048px;top:540px">Name:</div><div class="tbox" style="left:1111px;top:536px;width:121px;height:21px;background:#fbfbf9"><span style="position:absolute;left:2px;top:3px">VIA24D14A29</span></div><div class="t" style="left:1048px;top:562px">Symbol:</div><div class="tbox" style="left:1111px;top:558px;width:121px;height:21px"><span style="position:absolute;left:4px;top:0px;font-size:8px;color:#a0a0a0">×</span></div><div class="t" style="left:1048px;top:584px">Pin:</div><div class="tbox" style="left:1111px;top:580px;width:121px;height:21px"><span style="position:absolute;left:4px;top:0px;font-size:8px;color:#a0a0a0">×</span></div><div class="t" style="left:1048px;top:606px">Refdes:</div><div class="tbox" style="left:1111px;top:602px;width:121px;height:21px"><span style="position:absolute;left:4px;top:0px;font-size:8px;color:#a0a0a0">×</span></div><div class="t" style="left:1048px;top:628px">New name:</div><div class="tbox" style="left:1111px;top:624px;width:121px;height:21px"></div><div class="btn" style="left:1049px;top:658px;width:55px;height:20px;line-height:18px">Purge -&gt;</div><div class="btn def" style="left:1126px;top:658px;width:47px;height:20px;line-height:18px">Edit...</div><div class="btn" style="left:1189px;top:658px;width:43px;height:20px;line-height:18px">Reset</div><div class="ptb" style="top:729px;height:17px;border-top:1px solid #8c8474;"><div class="grip" style="top:3px"></div><div class="grip" style="top:8px"></div><span style="position:absolute;left:10px;top:1px">Find</span>
<svg width="40" height="14" style="position:absolute;left:193px;top:2px"><path d="M3.5,4.5 h4 v3 h1 v1 h-6 v-1 h1 Z M5.5,8.5 v4" stroke="#000" stroke-width="1" fill="none" shape-rendering="crispEdges"/><path d="M21,3.5 l3.5,4 h-7 Z" fill="#000"/><path d="M31,3 l6,6 M37,3 l-6,6" stroke="#000" stroke-width="1.7"/></svg></div><div class="grp" style="left:1048px;top:761px;width:188px;height:120px"></div><div class="t blue" style="left:1055px;top:754px;padding:0 2px;background:#e7e7d8">Design Object Find Filter</div><div class="btn dis" style="left:1056px;top:773px;width:43px;height:14px;line-height:13px">All On</div><div class="btn dis" style="left:1112px;top:773px;width:47px;height:14px;line-height:13px">All Off</div><div class="cbd" style="left:1055px;top:795px"></div><div class="cbd" style="left:1139px;top:795px"></div><div class="t gray" style="left:1071px;top:795px">Groups</div><div class="t gray" style="left:1155px;top:795px">Shapes</div><div class="cbd" style="left:1055px;top:817px"></div><div class="cbd" style="left:1139px;top:817px"></div><div class="t gray" style="left:1071px;top:817px">Comps</div><div class="t gray" style="left:1155px;top:817px">Voids</div><div class="cbd" style="left:1055px;top:839px"></div><div class="cbd" style="left:1139px;top:839px"></div><div class="t gray" style="left:1071px;top:839px">Symbols</div><div class="t gray" style="left:1155px;top:839px">Cline Segs</div><div class="cbd" style="left:1055px;top:861px"></div><div class="cbd" style="left:1139px;top:861px"></div><div class="t gray" style="left:1071px;top:861px"></div><div class="t gray" style="left:1155px;top:861px"></div>
<div style="position:absolute;left:0;top:486px;width:623px;height:377px;background:linear-gradient(90deg,#0a48e0 620px,#0838c0 621px,#001e9a 622px);border-radius:0 7px 0 0"></div><div style="position:absolute;left:0;top:486px;width:623px;height:40px;border-radius:0 7px 0 0;background:linear-gradient(#3d95ff 0px,#2b7cf7 3px,#0a5ef0 8px,#0058e8 18px,#0055e6 30px,#0a5ff0 36px,#0348d8 40px)"></div><div style="position:absolute;left:622px;top:492px;width:1px;height:371px;background:#001e9a"></div><div style="position:absolute;left:5px;top:497px;font-family:'Liberation Mono',monospace;font-weight:normal;font-size:20px;color:#fff;white-space:pre;letter-spacing:0;-webkit-text-stroke:0.6px #fff;text-shadow:1px 1px 0 #0a1a80">Padstack Designer: Editing Pad Definiti...</div><div class="xpb" style="left:521px;top:491px"><div style="position:absolute;left:6px;top:20px;width:11px;height:4px;background:#fff"></div></div><div class="xpb dis" style="left:554px;top:491px"><div style="position:absolute;left:5px;top:5px;width:19px;height:19px;border:2px solid #8ca8f0;border-top-width:3px"></div></div><div class="xpb cls" style="left:587px;top:491px"><svg width="31" height="31" style="position:absolute;left:0;top:0"><path d="M6.5,6.5 L24.5,24.5 M24.5,6.5 L6.5,24.5" stroke="#fff" stroke-width="3.4"/></svg></div><div style="position:absolute;left:0;top:525px;width:620px;height:338px;background:#e7e7d8"></div><div style="position:absolute;left:0;top:544px;width:619px;height:1px;background:#d6d3c2"></div><div style="position:absolute;left:0;top:545px;width:619px;height:1px;background:#fff"></div><div style="position:absolute;left:0;top:529px;font-family:'Liberation Mono',monospace;font-size:13.33px;color:#000;white-space:pre;letter-spacing:0">ile  <u>R</u>eports  <u>H</u>elp</div><div style="position:absolute;left:-2px;top:577px;width:607px;height:300px;background:#f4f3ee;border:1px solid #919b9c;border-right-color:#c8c8b8"></div><div style="position:absolute;left:0;top:579px;width:603px;height:284px;background:#e7e7d8;border-top:3px solid #fcfcfe"></div><div class="tab" style="left:0;top:560px;width:61px;height:18px;padding-left:0"><span style="position:absolute;left:5px;top:3px">Parameters</span></div><div class="tab sel" style="left:62px;top:557px;width:45px;height:22px"><span style="position:absolute;left:7px;top:3px">Layers</span></div><div class="grp" style="left:6px;top:594px;width:427px;height:228px"></div><div class="t blue" style="left:13px;top:588px;padding:0 2px;background:#e7e7d8">Padstack layers</div><div class="cb" style="left:41px;top:617px"></div><div class="t" style="left:57px;top:617px">Single layer mode</div><div class="hdr" style="left:43px;top:648px;width:137px;height:20px">Layer</div><div class="hdr" style="left:182px;top:648px;width:71px;height:20px">Regular Pad</div><div class="hdr" style="left:255px;top:648px;width:72px;height:20px">Thermal Relief</div><div class="hdr" style="left:329px;top:648px;width:71px;height:20px">Anti Pad</div><div style="position:absolute;left:43px;top:671px;width:384px;height:143px;background:#e7e7d8"></div><div class="rbtn" style="left:13px;top:672px;width:28px;height:16px">Bgn</div><div class="t" style="left:46px;top:675px">TOP</div><div class="t" style="left:185px;top:675px">Circle 24.00</div><div class="t" style="left:259px;top:675px">Flash</div><div class="t" style="left:333px;top:675px">Circle 29.00</div><div style="position:absolute;left:44px;top:688px;width:361px;height:1px;background:#000"></div><div class="rbtn" style="left:13px;top:689px;width:28px;height:16px">-&gt;</div><div class="t" style="left:46px;top:692px">SGND</div><div class="t" style="left:185px;top:692px">Circle 24.00</div><div class="t" style="left:259px;top:692px">Flash</div><div class="t" style="left:333px;top:692px">Circle 29.00</div><div style="position:absolute;left:44px;top:705px;width:361px;height:1px;background:#000"></div><div class="rbtn" style="left:13px;top:706px;width:28px;height:16px">-&gt;</div><div class="t" style="left:46px;top:709px">IN1</div><div class="t" style="left:185px;top:709px">Circle 24.00</div><div class="t" style="left:259px;top:709px">Flash</div><div class="t" style="left:333px;top:709px">Circle 29.00</div><div style="position:absolute;left:44px;top:722px;width:361px;height:1px;background:#000"></div><div class="rbtn" style="left:13px;top:723px;width:28px;height:16px">-&gt;</div><div class="t" style="left:46px;top:726px">IN2</div><div class="t" style="left:185px;top:726px">Circle 24.00</div><div class="t" style="left:259px;top:726px">Flash</div><div class="t" style="left:333px;top:726px">Circle 29.00</div><div style="position:absolute;left:44px;top:739px;width:361px;height:1px;background:#000"></div><div class="rbtn" style="left:13px;top:740px;width:28px;height:16px">-&gt;</div><div class="t" style="left:46px;top:743px">SVCC</div><div class="t" style="left:185px;top:743px">Circle 24.00</div><div class="t" style="left:259px;top:743px">Flash</div><div class="t" style="left:333px;top:743px">Circle 29.00</div><div style="position:absolute;left:44px;top:756px;width:361px;height:1px;background:#000"></div><div class="rbtn" style="left:13px;top:757px;width:28px;height:16px">-&gt;</div><div class="t" style="left:46px;top:760px">IN3</div><div class="t" style="left:185px;top:760px">Circle 24.00</div><div class="t" style="left:259px;top:760px">Flash</div><div class="t" style="left:333px;top:760px">Circle 29.00</div><div style="position:absolute;left:44px;top:773px;width:361px;height:1px;background:#000"></div><div class="rbtn" style="left:13px;top:774px;width:28px;height:16px">-&gt;</div><div class="t" style="left:46px;top:777px">SGND1</div><div class="t" style="left:185px;top:777px">Circle 24.00</div><div class="t" style="left:259px;top:777px">Flash</div><div class="t" style="left:333px;top:777px">Circle 29.00</div><div style="position:absolute;left:44px;top:790px;width:361px;height:1px;background:#000"></div><div style="position:absolute;left:182px;top:672px;width:1px;height:119px;background:#000"></div><div style="position:absolute;left:256px;top:672px;width:1px;height:119px;background:#000"></div><div style="position:absolute;left:330px;top:672px;width:1px;height:119px;background:#000"></div><div style="position:absolute;left:405px;top:672px;width:21px;height:120px;background:#f3f1e6"></div><div class="sbtn" style="left:405px;top:675px;width:19px;height:19px"><svg width="19" height="19" style="position:absolute;left:0;top:0"><path d="M5.5,11.5 L9.5,7.5 L13.5,11.5" stroke="#4d6185" stroke-width="2" fill="none"/></svg></div><div class="sbtn" style="left:405px;top:696px;width:19px;height:17px"><svg width="19" height="17"><path d="M6,6.5 h7 M6,8.5 h7 M6,10.5 h7" stroke="#a8b8e0"/></svg></div><div class="sbtn" style="left:405px;top:771px;width:19px;height:19px"><svg width="19" height="19" style="position:absolute;left:0;top:0"><path d="M5.5,7.5 L9.5,11.5 L13.5,7.5" stroke="#4d6185" stroke-width="2" fill="none"/></svg></div><div style="position:absolute;left:44px;top:792px;width:382px;height:21px;background:#f3f1e6"></div><div class="sbtn" style="left:45px;top:793px;width:19px;height:18px"><svg width="19" height="18"><path d="M11,5 L7,9 L11,13" stroke="#4d6185" stroke-width="2" fill="none"/></svg></div><div class="sbtn" style="left:65px;top:793px;width:19px;height:18px"><svg width="19" height="18"><path d="M7.5,6 v6 M9.5,6 v6 M11.5,6 v6" stroke="#a8b8e0"/></svg></div><div class="sbtn" style="left:384px;top:793px;width:19px;height:18px"><svg width="19" height="18"><path d="M8,5 L12,9 L8,13" stroke="#4d6185" stroke-width="2" fill="none"/></svg></div><div style="position:absolute;left:43px;top:671px;width:384px;height:142px;border:1px solid #000"></div><div class="grp" style="left:440px;top:594px;width:146px;height:229px"></div><div class="t blue" style="left:447px;top:588px;padding:0 2px;background:#e7e7d8">Views</div><div class="t" style="left:455px;top:619px">Type:&nbsp;&nbsp;&nbsp;Through</div><div class="rad" style="left:454px;top:651px"><div class="dot"></div></div><div class="t" style="left:470px;top:650px">XSection</div><div class="rad" style="left:524px;top:651px"></div><div class="t" style="left:540px;top:650px">Top</div><svg width="120" height="120" style="position:absolute;left:454px;top:669px"><rect x="0" y="0" width="120" height="120" fill="#f7f7f7"/><rect x="32" y="11" width="55" height="97" fill="#00ee00"/><rect x="12" y="11" width="20" height="2" fill="#ef0000"/><rect x="87" y="11" width="21" height="2" fill="#ef0000"/><rect x="12" y="23" width="20" height="2" fill="#0000e0"/><rect x="87" y="23" width="21" height="2" fill="#0000e0"/><rect x="12" y="35" width="20" height="2" fill="#0000e0"/><rect x="87" y="35" width="21" height="2" fill="#0000e0"/><rect x="12" y="47" width="20" height="2" fill="#0000e0"/><rect x="87" y="47" width="21" height="2" fill="#0000e0"/><rect x="12" y="59" width="20" height="2" fill="#0000e0"/><rect x="87" y="59" width="21" height="2" fill="#0000e0"/><rect x="12" y="70" width="20" height="2" fill="#0000e0"/><rect x="87" y="70" width="21" height="2" fill="#0000e0"/><rect x="12" y="82" width="20" height="2" fill="#0000e0"/><rect x="87" y="82" width="21" height="2" fill="#0000e0"/><rect x="12" y="94" width="20" height="2" fill="#a8a8b0"/><rect x="87" y="94" width="21" height="2" fill="#a8a8b0"/><rect x="12" y="106" width="20" height="2" fill="#0000e0"/><rect x="87" y="106" width="21" height="2" fill="#0000e0"/></svg><div class="grp" style="left:63px;top:847px;width:159px;height:40px"></div><div class="t blue" style="left:69px;top:841px;padding:0 2px;background:#e7e7d8">Regular Pad</div><div class="combo" style="left:76px;top:856px;width:86px;height:19px;background:#fff"><span style="position:absolute;left:3px;top:2px">Flash</span><div class="cbtn" style="left:66px;top:1px;width:18px;height:17px"></div></div><div class="grp" style="left:244px;top:847px;width:160px;height:40px"></div><div class="t blue" style="left:250px;top:841px;padding:0 2px;background:#e7e7d8">Thermal Relief</div><div class="combo" style="left:257px;top:856px;width:86px;height:19px;background:#fff"><span style="position:absolute;left:3px;top:2px">Flash</span><div class="cbtn" style="left:66px;top:1px;width:18px;height:17px"></div></div><div class="grp" style="left:426px;top:847px;width:160px;height:40px"></div><div class="t blue" style="left:432px;top:841px;padding:0 2px;background:#e7e7d8">Anti Pad</div><div class="combo" style="left:439px;top:856px;width:86px;height:19px;background:#fff"><span style="position:absolute;left:3px;top:2px">Flash</span><div class="cbtn" style="left:66px;top:1px;width:18px;height:17px"></div></div>
<svg width="1276" height="863" style="position:absolute;left:0;top:0"><defs><filter id="sh" x="-20%" y="-20%" width="140%" height="140%"><feGaussianBlur stdDeviation="2.5"/></filter></defs><rect x="1035" y="286" width="197" height="25" fill="none" stroke="#2a2a20" stroke-opacity="0.6" stroke-width="5" filter="url(#sh)"/><rect x="1033.5" y="282.5" width="197" height="26" fill="none" stroke="#ff00ff" stroke-width="3"/><rect x="251" y="646" width="83" height="163" fill="none" stroke="#2a2a20" stroke-opacity="0.6" stroke-width="5" filter="url(#sh)"/><rect x="248.5" y="642.5" width="83" height="163" fill="none" stroke="#ff00ff" stroke-width="3"/><path d="M375,447 L304,611" stroke="#ff00ff" stroke-width="3" fill="none"/><path d="M295,635 L299.5,608.5 L303.5,613 L311,613.5 Z" fill="#ff00ff"/></svg>
</body></html>
